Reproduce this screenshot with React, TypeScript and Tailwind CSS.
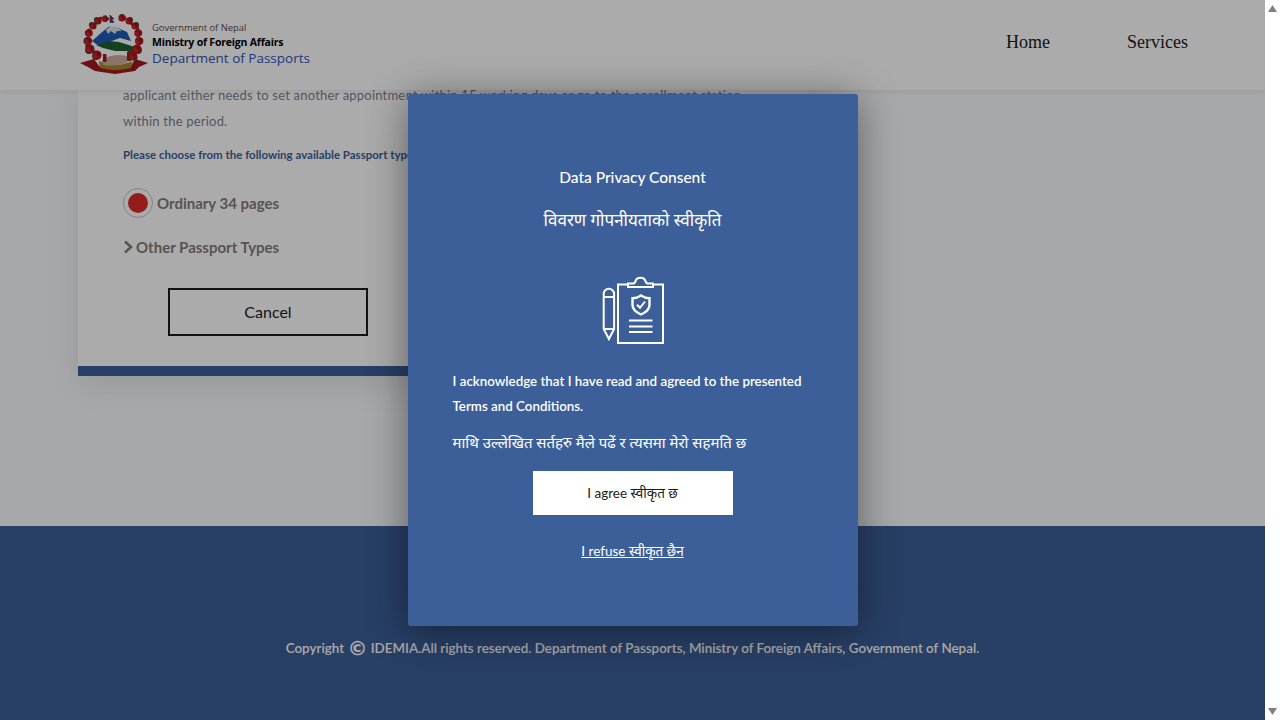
import React from "react";

const sans = "font-['Lato','Noto_Sans',sans-serif]";

function Emblem() {
  const flowers: [number, number, number, number, number][] = [
    [23, 11, 3.6, -1, -1], [18, 16, 3.6, -1, -1], [14, 23, 3.8, -1, 0], [13, 31, 4.2, -1, 0], [15, 39, 4.6, -1, 1], [22, 45, 4.6, -1, 1],
    [30, 9, 3.1, 0, -1], [47, 8, 3.6, 0, -1], [54, 11, 3.5, 1, -1], [60, 16, 3.6, 1, -1], [63, 23, 3.8, 1, 0], [64, 31, 4, 1, 0], [62, 39, 4.6, 1, 1], [58, 46, 4.2, 1, 1],
  ];
  return (
    <svg width="77" height="70" viewBox="0 0 77 70" className="shrink-0">
      <path d="M5 53 L19 49 L24 56 L40 60 L56 56 L60 49 L73 53 L64 57 L60 61 L40 64 L20 61 L13 57 Z" fill="#a31820" />
      <path d="M24 51 Q40 59 57 51 L56 58 Q40 62 25 58 Z" fill="#a8862e" />
      <path d="M17 31 L26 23 L34 16.5 L43 18 L52 22 L56 31 L45 28 L34 32 L24 36 Z" fill="#1f5cb8" />
      <path d="M31 20 L35 16.5 L43 18 L47 21 L42 21 L40 24 L36 21 L33 24 Z" fill="#dfe3e8" />
      <path d="M21 35 L34 31 L44 32 L60 37 L60 47 L52 41 L40 41 L28 38 Z" fill="#23602e" />
      <path d="M27 50 Q38 43 52 46 L52 53 Q38 57 28 55 Z" fill="#cfae9e" />
      <path d="M28 44 h3.5 v8 h-3.5z M52 42 h3.5 v9 h-3.5z" fill="#a31820" />
      <path d="M35 5 L39 9 L36.5 9 L39 12.5 L35 12.5 Z" fill="#b01a2a" stroke="#24408a" strokeWidth="0.7" />
      {flowers.map(([x, y, r, dx, dy], i) => (
        <g key={i}>
          <circle cx={x + dx * 1.2} cy={y + dy * 1.2} r={r * 0.8} fill="#2a5d33" />
          <circle cx={x - dy * 2.8} cy={y + dx * 2.8} r={r * 0.45} fill="#2a5d33" />
          <circle cx={x} cy={y} r={r} fill="#b5141e" />
          <circle cx={x - 1.2} cy={y + 0.8} r={r * 0.55} fill="#c9242c" />
          <circle cx={x + 0.8} cy={y - 0.6} r={r * 0.25} fill="#8a0f17" />
        </g>
      ))}
    </svg>
  );
}

function ConsentIcon() {
  return (
    <svg width="75" height="80" viewBox="0 0 75 80" fill="none" stroke="white" strokeWidth="2" className="block">
      <path d="M33 14.5 H23 V73 H68 V14.5 H58" />
      <path d="M33 17 V13.5 H38 C40 13.5 40.5 11.5 41 10 C42 7 49 7 50 10 C50.5 11.5 51 13.5 53 13.5 H58 V17 Z" />
      <path d="M8.7 59 V24 a5.2 5.2 0 0 1 10.4 0 V59 L13.9 69 Z" />
      <path d="M8.7 27 H19.1 M8.7 59 H19.1" />
      <path d="M46 25.5 C43 27.5 41 28.2 37.5 28.2 V35 C37.5 39.5 41.5 42.5 46 44.5 C50.5 42.5 54.5 39.5 54.5 35 V28.2 C51 28.2 49 27.5 46 25.5 Z" strokeWidth="2.4" />
      <path d="M42 34.8 L45 37.8 L50 31.5" />
      <path d="M34 50.5 H57.5 M34 56.5 H57.5 M34 62 H57.5" />
    </svg>
  );
}

function Scrollbar() {
  return (
    <div className="w-[15px] shrink-0 bg-white flex flex-col justify-between items-center py-[5px]">
      <svg width="9" height="7" viewBox="0 0 9 7"><path d="M4.5 0 L9 7 H0 Z" fill="#808080" /></svg>
      <svg width="9" height="7" viewBox="0 0 9 7"><path d="M0 0 H9 L4.5 7 Z" fill="#808080" /></svg>
    </div>
  );
}

export default function App() {
  return (
    <div className={`h-screen w-full flex overflow-hidden ${sans}`}>
      <div className="relative flex-1 flex flex-col overflow-hidden bg-[#fafbff]">
        <header className="relative z-10 h-[90px] shrink-0 bg-white flex items-center justify-between pl-[75px] pr-[77px] shadow-[0_2px_6px_rgba(0,0,0,0.08)]">
          <div className="flex items-center h-[70px]">
            <Emblem />
            <div className="font-['Open_Sans',sans-serif] -mt-[5px]">
              <div className="text-[9.4px] leading-[15px] text-[#5a4a50]">Government of Nepal</div>
              <div className="text-[10.5px] leading-[15px] font-bold text-black tracking-[-0.2px]">Ministry of Foreign Affairs</div>
              <div className="text-[13.5px] leading-[16px] text-[#3352b8]">Department of Passports</div>
            </div>
          </div>
          <nav className="flex gap-[77px] -mt-[5px] font-['Liberation_Serif',serif] text-[18px] text-[#1c1c1c]">
            <span>Home</span>
            <span>Services</span>
          </nav>
        </header>

        <main className="h-[436px] shrink-0 pl-[78px]">
          <section className="w-[730px] -mt-[8px] h-[294px] bg-white flex flex-col border-b-[10px] border-[#3d5f99] shadow-[0_8px_30px_rgba(0,0,0,0.1)] pl-[45px] pr-[60px]">
            <p className="text-[13px] leading-[26px] text-[#7d8095] tracking-[0.2px]">
              applicant either needs to set another appointment within 15 working days or go to the enrollment station within the period.
            </p>
            <p className="mt-[11px] text-[11.5px] leading-[20px] font-bold text-[#3d5f99]">
              Please choose from the following available Passport types
            </p>
            <div className="mt-[23px] flex items-center gap-[4px]">
              <span className="w-[30px] h-[30px] rounded-full border border-[#c4c4c4] flex items-center justify-center">
                <span className="w-[20px] h-[20px] rounded-full bg-[#e02a2a]" />
              </span>
              <span className="text-[15px] font-bold text-[#857d7a]">Ordinary 34 pages</span>
            </div>
            <div className="mt-[17px] flex items-center gap-[3px] h-[24px]">
              <svg width="10" height="14" viewBox="0 0 10 14" fill="none" stroke="#857d7a" strokeWidth="2.5"><path d="M2 1.5 L8 7 L2 12.5" /></svg>
              <span className="text-[15px] font-bold text-[#857d7a]">Other Passport Types</span>
            </div>
            <button className="mt-[29px] ml-[45px] w-[200px] h-[48px] border-2 border-[#1c1c1c] text-[16px] text-[#1c1c1c]">Cancel</button>
          </section>
        </main>

        <footer className="flex-1 bg-[#3d5f99] text-center pt-[112px]">
          <p className="text-[13.4px] leading-[20px] font-semibold text-[#fdfdfd]">
            Copyright <span className="font-['DejaVu_Sans',sans-serif] text-[20px] leading-[18px] font-bold align-[-2px]">©</span> IDEMIA.All rights reserved. Department of Passports, Ministry of Foreign Affairs, Government of Nepal.
          </p>
        </footer>

        <div className="absolute inset-0 z-20 bg-black/33 flex items-center justify-center">
          <div className="w-[450px] h-[532px] rounded-[3px] bg-[#3d5f99] shadow-[0_5px_40px_rgba(0,0,0,0.45)] flex flex-col px-[45px] pt-[72px] text-white">
            <h2 className="text-center text-[15.5px] leading-[22px] font-medium">Data Privacy Consent</h2>
            <h3 className="mt-[18px] text-center text-[17px] leading-[28px]">विवरण गोपनीयताको स्वीकृति</h3>
            <div className="mt-[36px] flex justify-center">
              <ConsentIcon />
            </div>
            <p className="mt-[19px] text-[13.35px] leading-[25px] font-semibold">
              I acknowledge that I have read and agreed to the presented Terms and Conditions.
            </p>
            <p className="mt-[10px] text-[15px] leading-[26px]">माथि उल्लेखित सर्तहरु मैले पढें र त्यसमा मेरो सहमति छ</p>
            <button className="mt-[16px] self-center w-[200px] h-[44px] shrink-0 bg-white text-[#1c1c1c] text-[13.5px]">I agree स्वीकृत छ</button>
            <a className="mt-[26px] self-center text-[13.5px] leading-[20px] underline">I refuse स्वीकृत छैन</a>
          </div>
        </div>
      </div>
      <Scrollbar />
    </div>
  );
}
